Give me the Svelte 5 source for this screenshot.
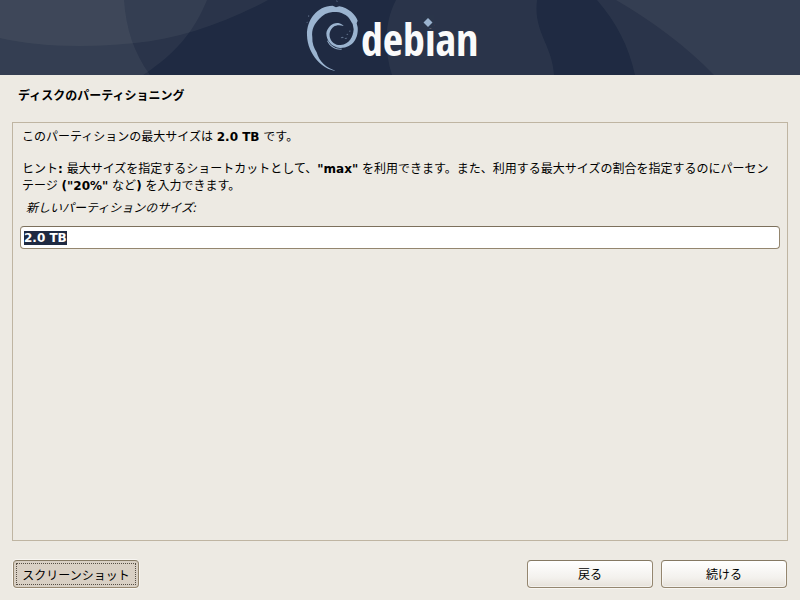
<script>
    import { onMount } from 'svelte';

    let size = '2.0 TB';
    let sizeInput;

    onMount(() => {
        sizeInput.focus();
        sizeInput.select();
    });
</script>

<div class="installer">
    <header>
        <svg class="banner" viewBox="0 0 800 75" preserveAspectRatio="xMidYMid slice" role="img" aria-label="debian">
            <rect width="800" height="75" fill="#1f2a42" />
            <g fill="#fbffe8" fill-opacity="0.05">
                <path d="M0 0H268C225 23 178 39 135 43C86 48 40 47 0 38Z" />
                <path d="M0 0H207C195 29 178 52 143 75H0Z" />
                <path d="M0 0H124C126 29 134 53 150 75H0Z" />
                <path d="M396 0H537C533 32 552 44 554 75H392C384 50 384 23 396 0Z" />
                <path d="M597 0H800V75H635C629 47 617 23 597 0Z" />
                <path d="M616 0H800V75H714C686 46 652 21 616 0Z" />
            </g>
            <g fill="#9bb4d0" transform="translate(300 0) scale(0.3333)">
                <path d="M107 212C72 211 22 165 21 105C20 60 50 18 98 17L108 22L118 19C145 23 168 45 173 62L170 70L173 82C176 112 160 145 120 144C95 142 79 122 79 100C81 82 98 67 115 69C122 70 128 74 131 78C120 74 108 75 101 80C91 88 86 100 90 113C95 129 108 136 122 135C148 133 159 112 161 88L158 72C150 60 146 48 132 43C120 35 106 36 98 36C82 37 68 45 58 56C43 71 34 88 37 112C36 130 42 145 50 157C57 185 80 205 107 212Z" />
                <path d="M84 122C94 141 108 146 126 146L124 149C105 149 89 140 81 122Z" />
                <path d="M122 112l6-2 4 3-7 2zM134 114l8-1-2 3-5 1zM139 102l4-1 2 3-4 1zM148 92l3-1v4l-3 1zM24 48l3-3 1 4-3 2zM20 66l3-1v3l-3 1zM109 1l4 2-1 3-3-2z" fill-opacity="0.5" />
            </g>
            <text class="wordmark" x="361" y="56">debian</text>
            <rect x="423" y="15" width="11" height="13" fill="#2a354a" />
            <path d="M428 18l4.500 4.500-4.500 4.500-4.500-4.500z" fill="#9bb4d0" />
        </svg>
    </header>

    <main>
        <h1>ディスクのパーティショニング</h1>

        <section class="question">
            <p>このパーティションの最大サイズは <b>2.0 TB</b> です。</p>
            <p class="hint">ヒント<b>:</b> 最大サイズを指定するショートカットとして、<b>"max"</b> を利用できます。また、利用する最大サイズの割合を指定するのにパーセンテージ <b>("20%"</b> など<b>)</b> を入力できます。</p>
            <label for="size">新しいパーティションのサイズ:</label>
            <input id="size" type="text" bind:value={size} bind:this={sizeInput} />
        </section>

        <footer>
            <button type="button" class="screenshot"><span>スクリーンショット</span></button>
            <div class="nav">
                <button type="button">戻る</button>
                <button type="button">続ける</button>
            </div>
        </footer>
    </main>
</div>

<style>
    :global(body) {
        margin: 0;
        background: #edeae3;
    }

    .installer {
        display: flex;
        flex-direction: column;
        min-height: 100vh;
        background: #edeae3;
        color: #000;
        font-family: "DejaVu Sans", "Noto Sans CJK JP", sans-serif;
        font-size: 12px;
    }

    .installer * {
        box-sizing: border-box;
    }

    .banner {
        display: block;
        width: 100%;
        height: 75px;
    }

    .wordmark {
        font-family: "Noto Sans ExtraCondensed", "Open Sans Condensed", "Roboto Condensed", "Noto Sans Condensed", Roboto, sans-serif;
        font-size: 44px;
        font-weight: 600;
        fill: #fafafa;
    }

    main {
        flex: 1;
        display: flex;
        flex-direction: column;
        padding: 13px 12px 12px;
    }

    h1 {
        margin: 0 6px 17px;
        font-size: 12px;
        line-height: 17px;
    }

    .question {
        flex: 1;
        display: flex;
        flex-direction: column;
        padding: 6px 7px;
        border: 1px solid #bfb5a2;
    }

    p {
        margin: 0 3px 0 2px;
        line-height: 17px;
    }

    .hint {
        margin-top: 15px;
        line-break: anywhere;
    }

    label {
        margin: 5px 6px 9px;
        font-style: italic;
        line-height: 17px;
    }

    input {
        width: 100%;
        height: 23px;
        padding: 0 3px;
        border: 1px solid #94866f;
        border-top-color: #7c705c;
        border-radius: 4px;
        outline: none;
        background: #fff;
        font-family: inherit;
        font-size: 12px;
        font-weight: bold;
    }

    input::selection {
        background: #1f2a42;
        color: #fff;
    }

    footer {
        display: flex;
        justify-content: space-between;
        margin-top: 19px;
        padding: 0 1px;
    }

    .nav {
        display: flex;
        gap: 8px;
    }

    button {
        width: 126px;
        height: 28px;
        padding: 0 0 2px;
        border: 1px solid #94866f;
        border-top-color: #857963;
        border-radius: 4px;
        background: linear-gradient(#fff, #f3f1ed 65%, #e6e1d9);
        box-shadow: inset 0 0 0 1px rgba(255, 255, 255, 0.5), 0 1px 0 #f8f6f2;
        color: #000;
        font-family: inherit;
        font-size: 12px;
    }

    .screenshot {
        padding: 2px;
        background: #d9d0c4;
        box-shadow: 0 0 0 1px #f8f6f2;
    }

    .screenshot span {
        display: flex;
        align-items: center;
        justify-content: center;
        height: 100%;
        border: 1px dotted #554e44;
    }
</style>
